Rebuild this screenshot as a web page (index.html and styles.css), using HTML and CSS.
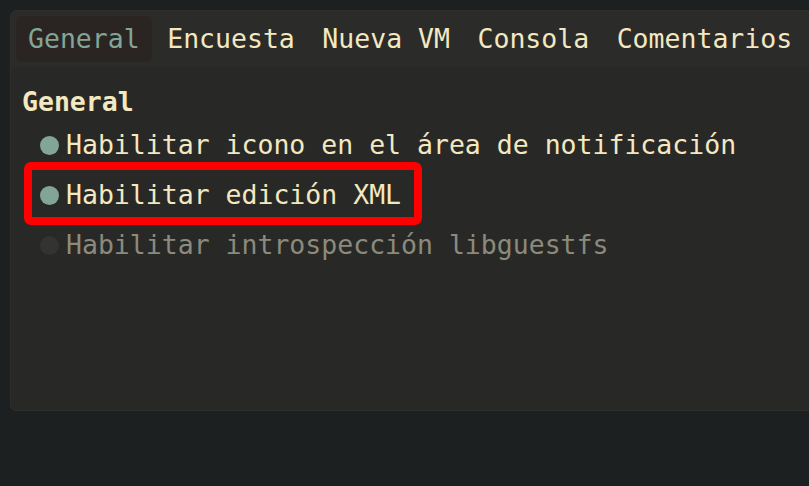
FILE: index.html
```html
<!DOCTYPE html>
<html lang="es">
<head>
<meta charset="utf-8">
<title>Preferencias</title>
<link rel="stylesheet" href="styles.css">
</head>
<body>
<div class="panel">
  <nav class="tabs">
    <span class="tab active">General</span>
    <span class="tab">Encuesta</span>
    <span class="tab">Nueva VM</span>
    <span class="tab">Consola</span>
    <span class="tab">Comentarios</span>
  </nav>
  <section class="content">
    <h2 class="heading">General</h2>
    <div class="row"><span class="dot"></span><span class="label">Habilitar icono en el área de notificación</span></div>
    <div class="row marked"><span class="dot"></span><span class="label">Habilitar edición XML</span></div>
    <div class="row disabled"><span class="dot"></span><span class="label">Habilitar introspección libguestfs</span></div>
  </section>
</div>
</body>
</html>
```
FILE: styles.css
```css
html, body {
  margin: 0;
  padding: 0;
}
body {
  background: #1d2021;
  font-family: "DejaVu Sans Mono", "Liberation Mono", monospace;
  font-size: 26.5px;
  color: #f4e8c1;
  overflow: hidden;
  height: 486px;
  padding-top: 10px;
  padding-left: 10px;
  box-sizing: border-box;
}
.panel {
  width: 830px;
  height: 401px;
  background: #282927;
  border: 1px solid #2e2f2d;
  border-radius: 6px;
  box-sizing: border-box;
  overflow: hidden;
}
.tabs {
  display: flex;
  gap: 3.5px;
  height: 56px;
  padding: 5px 5px;
  box-sizing: border-box;
  background: #2b2c2a;
}
.tab {
  padding: 0 12px;
  height: 46px;
  line-height: 46px;
  border-radius: 6px;
  white-space: nowrap;
  color: #f4e8c1;
}
.tab.active {
  background: #2a2523;
  color: #83a598;
}
.content {
  padding: 17px 0 0 11px;
}
.heading {
  margin: 0;
  font-size: 26.5px;
  font-weight: bold;
  line-height: 36px;
  height: 36px;
  color: #f4e8c1;
}
.row {
  position: relative;
  display: flex;
  align-items: center;
  width: fit-content;
  height: 50px;
  margin-left: 18px;
  gap: 7px;
  white-space: nowrap;
}
.dot {
  width: 19px;
  height: 19px;
  border-radius: 50%;
  background: #83a598;
  flex: none;
}
.label {
  line-height: 50px;
}
.row.disabled .dot {
  background: #333432;
}
.row.disabled .label {
  color: #8c8a7c;
}
.row.marked::after {
  content: "";
  position: absolute;
  left: -16px;
  right: -21px;
  top: -8px;
  bottom: -5px;
  border: 8px solid #ff0000;
  border-radius: 7px;
  box-sizing: border-box;
  pointer-events: none;
}
```
